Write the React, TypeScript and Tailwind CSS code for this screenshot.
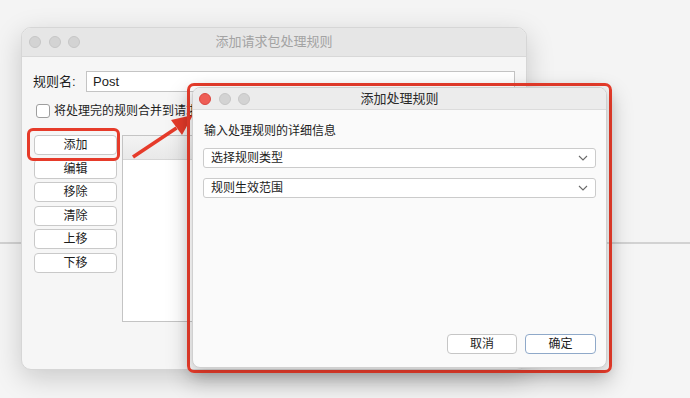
import React from 'react';

const font = '"Liberation Sans", "Noto Sans CJK SC", sans-serif';

function Lights({ active = false }: { active?: boolean }) {
  return (
    <div className="flex items-center gap-[7.5px]">
      <span className={`w-[12px] h-[12px] rounded-full ${active ? 'bg-[#ee5d55] border border-[#d9473f]' : 'bg-[#d3d3d3] border border-[#c6c6c6]'}`} />
      <span className="w-[12px] h-[12px] rounded-full bg-[#d3d3d3] border border-[#c6c6c6]" />
      <span className="w-[12px] h-[12px] rounded-full bg-[#d3d3d3] border border-[#c6c6c6]" />
    </div>
  );
}

function SideButton({ label }: { label: string }) {
  return (
    <button className="h-[20px] w-[83px] rounded-[4px] border border-[#c9c9c9] bg-white text-[12px] leading-none text-[#1d1d1d] flex items-center justify-center">
      {label}
    </button>
  );
}

function Chevron() {
  return (
    <svg width="10" height="6" viewBox="0 0 10 6" fill="none">
      <polyline points="1,1 5,5 9,1" stroke="#6b6b6b" strokeWidth="1.1" />
    </svg>
  );
}

function SelectBox({ label }: { label: string }) {
  return (
    <div className="h-[20px] rounded-[3px] border border-[#cbcbcb] bg-white flex items-center justify-between pl-[7px] pr-[7px] text-[12px] text-[#1d1d1d]">
      <span>{label}</span>
      <Chevron />
    </div>
  );
}

export default function App() {
  return (
    <div className="relative w-[690px] h-[398px] overflow-hidden bg-[#f5f5f5]" style={{ fontFamily: font }}>
      {/* desktop background with a divider */}
      <div className="h-[244px] border-b-2 border-[#d2d2d2] bg-[#f4f4f4]" />

      {/* back window */}
      <div className="absolute left-[21px] top-[27px] w-[506px] h-[343px] rounded-[10px] bg-[#f6f6f6] border border-[#d6d6d6] shadow-[0_8px_28px_rgba(0,0,0,0.18)] overflow-hidden flex flex-col">
        <div className="h-[29px] bg-[#e6e6e6] border-b border-[#d8d8d8] grid grid-cols-[1fr_auto_1fr] items-center px-[7px]">
          <Lights />
          <span className="text-[13px] text-[#a3a3a3]">添加请求包处理规则</span>
          <span />
        </div>
        <div className="flex-1 flex flex-col px-[11px] pt-[14px]">
          <div className="flex items-center">
            <span className="w-[53px] text-[13px] text-[#1d1d1d]">规则名:</span>
            <div className="flex-1 h-[21px] bg-white border border-[#c4c4c4] flex items-center pl-[6px] text-[13px] text-[#1d1d1d]">
              Post
            </div>
          </div>
          <div className="flex items-center mt-[11px] ml-[3px] gap-[4px]">
            <span className="w-[14px] h-[14px] rounded-[3px] border border-[#9e9e9e] bg-white" />
            <span className="text-[12px] leading-[16px] text-[#1d1d1d]">将处理完的规则合并到请求包中</span>
          </div>
          <div className="flex mt-[16px] gap-[5px] ml-[1px]">
            <div className="flex flex-col gap-[3.6px]">
              <SideButton label="添加" />
              <SideButton label="编辑" />
              <SideButton label="移除" />
              <SideButton label="清除" />
              <SideButton label="上移" />
              <SideButton label="下移" />
            </div>
            <div className="flex-1 h-[187px] bg-white border border-[#c4c4c4] flex flex-col">
              <div className="h-[24px] bg-gradient-to-b from-[#f3f3f3] to-[#e9e9e9] border-b border-[#d6d6d6]" />
            </div>
          </div>
        </div>
      </div>

      {/* highlight around 添加 */}
      <div className="absolute left-[27px] top-[128px] w-[93px] h-[33px] rounded-[6px] border-[3px] border-[#e63b2a]" />

      {/* arrow */}
      <svg className="absolute left-0 top-0" width="690" height="398" viewBox="0 0 690 398">
        <polygon points="132,155.5 134,158.5 177.5,129.5 175.5,126.5" fill="#e63b2a" />
        <polygon points="193,115 171,120 182,135" fill="#e63b2a" />
      </svg>

      {/* front dialog with red frame */}
      <div className="absolute left-[187px] top-[83px] w-[425px] h-[290px] rounded-[7px] border-[3px] border-[#e63b2a] pt-[1px] pl-[2px] pr-[2px] pb-[2px] flex shadow-[0_10px_22px_rgba(0,0,0,0.2)]">
        <div className="flex-1 rounded-[8px] bg-[#fafafa] shadow-[0_4px_14px_rgba(0,0,0,0.22)] border border-[#d0d0d0] overflow-hidden flex flex-col">
          <div className="h-[22px] bg-[#ececec] border-b border-[#dcdcdc] grid grid-cols-[1fr_auto_1fr] items-center px-[6px]">
            <Lights active />
            <span className="text-[13px] text-[#2a2a2a]">添加处理规则</span>
            <span />
          </div>
          <div className="flex-1 flex flex-col px-[10px] pt-[13px] pb-[13px]">
            <div className="text-[12px] leading-[16px] text-[#1d1d1d] pl-[1px]">输入处理规则的详细信息</div>
            <div className="mt-[9px] flex flex-col gap-[10px]">
              <SelectBox label="选择规则类型" />
              <SelectBox label="规则生效范围" />
            </div>
            <div className="mt-auto flex justify-end gap-[8px]">
              <button className="h-[20px] w-[70px] rounded-[4px] border border-[#c6c6c6] bg-white text-[12px] text-[#1d1d1d] flex items-center justify-center">
                取消
              </button>
              <button className="h-[20px] w-[71px] rounded-[4px] border border-[#8fa9c9] bg-white text-[12px] text-[#1d1d1d] flex items-center justify-center">
                确定
              </button>
            </div>
          </div>
        </div>
      </div>
    </div>
  );
}
